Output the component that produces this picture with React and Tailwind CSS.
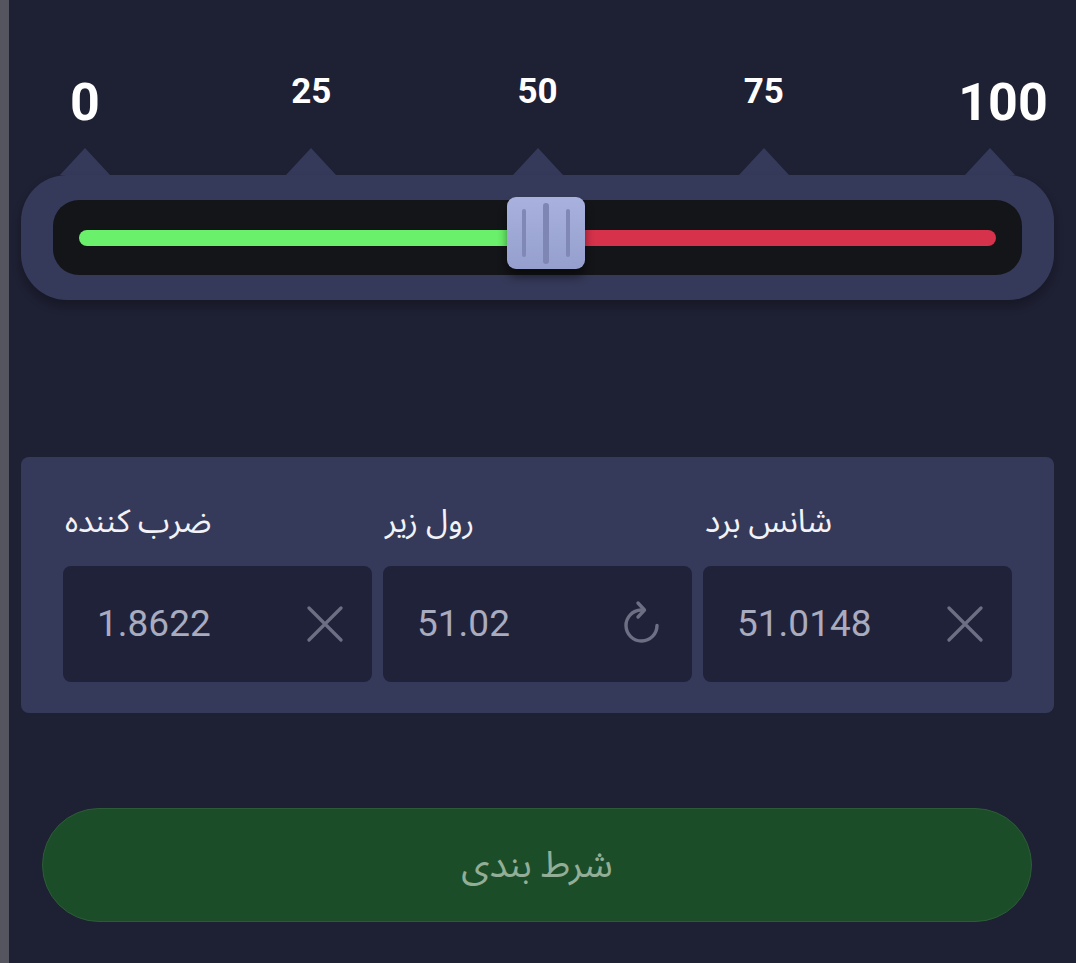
import React from "react";

const ticks = [
  { label: "0", big: true },
  { label: "25" },
  { label: "50" },
  { label: "75" },
  { label: "100", big: true },
];

const fields = [
  { label: "ضرب کننده", value: "1.8622", icon: "x" },
  { label: "رول زیر", value: "51.02", icon: "refresh" },
  { label: "شانس برد", value: "51.0148", icon: "x" },
];

function CloseIcon() {
  return (
    <svg width="36" height="36" viewBox="0 0 36 36" fill="none">
      <path d="M2 2 L34 34 M34 2 L2 34" stroke="#6d7084" strokeWidth="3.2" strokeLinecap="round" />
    </svg>
  );
}

function RefreshIcon() {
  return (
    <svg width="42" height="48" viewBox="0 0 42 48" fill="none">
      <path
        d="M20 10 A15.5 15.5 0 1 0 36 25.5"
        stroke="#6d7084"
        strokeWidth="3.4"
        strokeLinecap="round"
      />
      <path
        d="M17 3 L23.5 10 L17 17"
        stroke="#6d7084"
        strokeWidth="3.4"
        strokeLinecap="round"
        strokeLinejoin="round"
      />
    </svg>
  );
}

function Tick({ label, big, shift }) {
  return (
    <div className="flex h-[175px] w-[100px] flex-col items-center">
      <div
        className={
          big
            ? "mt-[77px] text-[52px] font-bold leading-none text-white"
            : "mt-[74px] text-[35px] font-bold leading-none text-white"
        }
        style={shift ? { transform: `translateX(${shift}px)` } : undefined}
      >
        {label}
      </div>
      <svg className="mt-auto" width="50" height="27" viewBox="0 0 50 27">
        <polygon points="25,0 50,27 0,27" fill="#363a5a" />
      </svg>
    </div>
  );
}

export default function App() {
  return (
    <div
      className="flex h-[963px] w-[1076px] overflow-hidden bg-[#1e2033]"
      style={{ fontFamily: 'Roboto, "Noto Sans Arabic", "DejaVu Sans", sans-serif' }}
    >
      <div className="w-[9px] shrink-0 bg-[#55555f]" />
      <div className="flex flex-1 flex-col">
        {/* scale labels */}
        <div className="flex justify-between pl-[26px] pr-[36px]">
          {ticks.map((t) => (
            <Tick key={t.label} label={t.label} big={t.big} shift={t.label === "100" ? 13 : 0} />
          ))}
        </div>

        {/* slider */}
        <div className="ml-[12px] mr-[22px] h-[125px] rounded-[46px] bg-[#363a5a] px-[32px] py-[25px] shadow-[0_6px_10px_rgba(0,0,0,0.25)]">
          <div className="relative flex h-[75px] items-center rounded-[26px] bg-[#141519] px-[26px]">
            <div className="flex h-[16px] flex-1">
              <div className="w-[467px] rounded-l-full bg-[#6af06a]" />
              <div className="flex-1 rounded-r-full bg-[#d6324b]" />
            </div>
            <div className="absolute left-[454px] top-[-3px] flex h-[72px] w-[78px] items-center justify-center gap-[17px] rounded-[9px] bg-gradient-to-b from-[#a9b2de] to-[#959fcd] shadow-[0_8px_10px_rgba(0,0,0,0.45)]">
              <div className="h-[48px] w-[4px] rounded-full bg-[#8089b6]" />
              <div className="h-[61px] w-[6px] rounded-full bg-[#7e87b3]" />
              <div className="h-[48px] w-[4px] rounded-full bg-[#8089b6]" />
            </div>
          </div>
        </div>

        {/* inputs panel */}
        <div className="ml-[12px] mr-[22px] mt-[157px] rounded-[8px] bg-[#363a5a] px-[42px] pb-[31px] pt-[44px]">
          <div className="grid grid-cols-3 gap-[11px]">
            {fields.map((f) => (
              <div key={f.label} className="flex flex-col">
                <div className="h-[65px] pl-[2px] text-[32px] leading-[40px] text-[#f2f2f7]" dir="rtl" style={{ textAlign: "left" }}>
                  {f.label}
                </div>
                <div className="flex h-[116px] items-center justify-between rounded-[8px] bg-[#20223a] pl-[34px] pr-[29px]">
                  <span className="text-[37px] text-[#a9abbf]">{f.value}</span>
                  {f.icon === "x" ? <CloseIcon /> : <RefreshIcon />}
                </div>
              </div>
            ))}
          </div>
        </div>

        {/* bet button */}
        <div className="ml-[33px] mr-[44px] mt-[95px] flex h-[114px] items-center justify-center rounded-full border border-[#2c5c37] bg-[#1c4d29]">
          <span className="text-[37px] text-[#93ae96]" dir="rtl">
            شرط بندی
          </span>
        </div>
      </div>
    </div>
  );
}
